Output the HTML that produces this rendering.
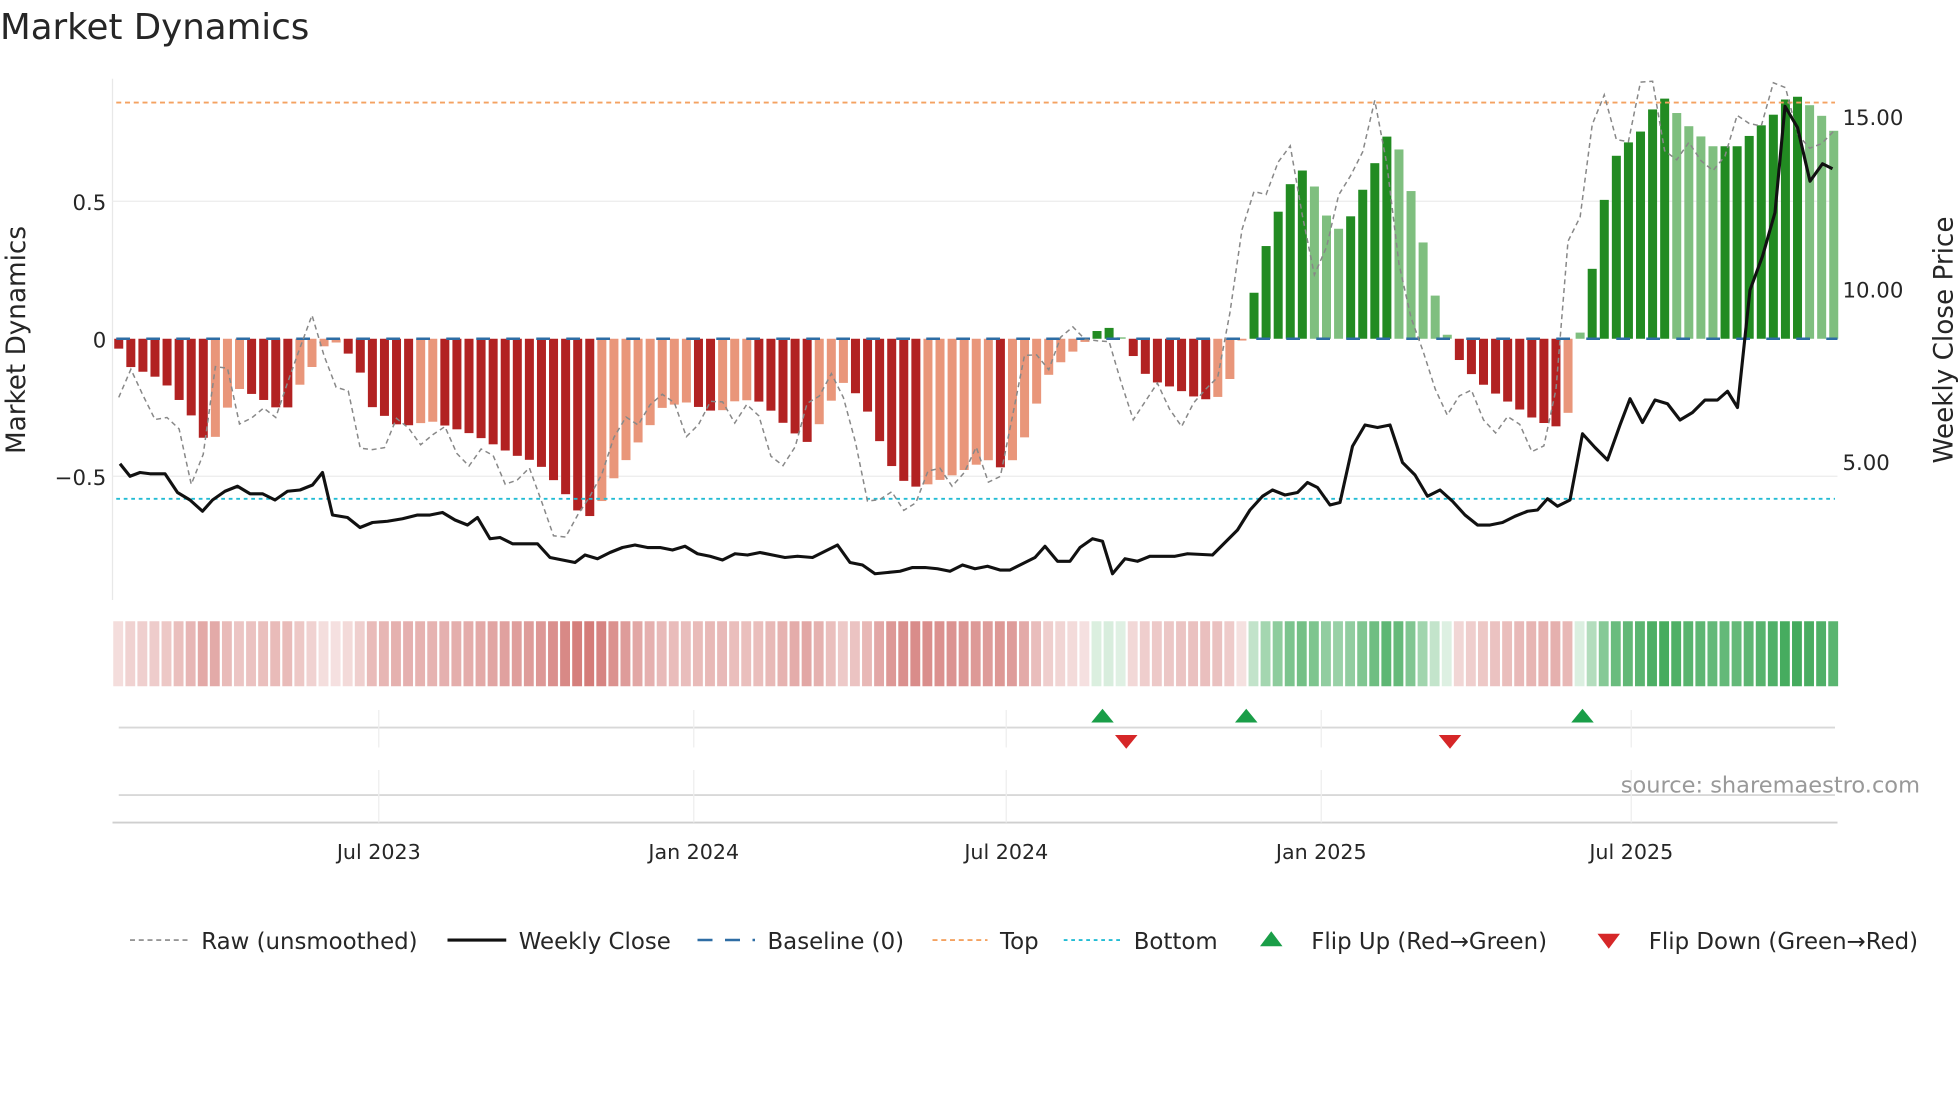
<!DOCTYPE html>
<html><head><meta charset="utf-8"><style>
html,body{margin:0;padding:0;background:#fff;width:1960px;height:1102px;overflow:hidden}
svg{display:block}
text{font-family:"DejaVu Sans","Liberation Sans",sans-serif;fill:#262626}
</style></head><body>
<svg id="s" width="1960" height="1102" viewBox="0 0 1568 881.6" xmlns="http://www.w3.org/2000/svg">
<text x="0" y="31" font-size="28.5">Market Dynamics</text>
<line x1="90" y1="63" x2="90" y2="480" stroke="#e8e8e8" stroke-width="1"/>
<line x1="90" y1="161" x2="1470" y2="161" stroke="#ececec"/>
<line x1="90" y1="381" x2="1470" y2="381" stroke="#ececec"/>
<text x="85" y="168" font-size="17" text-anchor="end">0.5</text>
<text x="85" y="278" font-size="17" text-anchor="end">0</text>
<text x="85" y="388" font-size="17" text-anchor="end">−0.5</text>
<text x="1474" y="100" font-size="17">15.00</text>
<text x="1474" y="238" font-size="17">10.00</text>
<text x="1474" y="376" font-size="17">5.00</text>
<text transform="translate(20,272) rotate(-90)" font-size="21" text-anchor="middle">Market Dynamics</text>
<text transform="translate(1562,272) rotate(-90)" font-size="21" text-anchor="middle">Weekly Close Price</text>
<g id="bars"></g>
<line x1="93" y1="82" x2="1468" y2="82" stroke="#f4a261" stroke-width="1.5" stroke-dasharray="4,3"/>
<line x1="93" y1="399" x2="1468" y2="399" stroke="#22bcd4" stroke-width="1.5" stroke-dasharray="3,3"/>
<line x1="93" y1="271" x2="1470" y2="271" stroke="#2e6da4" stroke-width="2" stroke-dasharray="11,13"/>
<polyline id="raw" fill="none" stroke="#888" stroke-width="1.2" stroke-dasharray="4,3"/>
<polyline id="close" fill="none" stroke="#111" stroke-width="2.5" stroke-linejoin="round" points="96,371 104,381 112,378 120,379 132,379 142,394 152,400 162,409 170,400 180,393 190,389 200,395 210,395 220,400 230,393 240,392 250,388 258,378 266,412 278,414 288,422 298,418 310,417 322,415 334,412 344,412 354,410 364,416 374,420 382,414 392,431 400,430 410,435 420,435 430,435 440,446 450,448 460,450 468,444 478,447 488,442 498,438 508,436 518,438 528,438 538,440 548,437 558,443 568,445 578,448 588,443 598,444 608,442 618,444 628,446 638,445 650,446 660,441 670,436 680,450 690,452 700,459 710,458 720,457 730,454 740,454 750,455 760,457 770,452 780,455 790,453 800,456 808,456 818,451 828,446 836,437 846,449 856,449 864,438 874,431 882,433 890,459 900,447 910,449 920,445 940,445 950,443 970,444 980,434 990,424 1000,408 1010,397 1018,392 1028,396 1038,394 1046,386 1054,390 1064,404 1072,402 1082,357 1092,340 1102,342 1112,340 1122,370 1132,380 1142,397 1152,392 1162,401 1172,412 1182,420 1192,420 1202,418 1212,413 1222,409 1230,408 1238,399 1246,405 1256,400 1266,347 1276,358 1286,368 1296,340 1304,319 1314,338 1324,320 1334,323 1344,336 1354,330 1364,320 1374,320 1382,313 1390,326 1400,232 1410,205 1420,170 1428,85 1438,102 1448,145 1458,131 1466,135"/>
<g id="heat"></g>
<line x1="95" y1="582" x2="1468" y2="582" stroke="#d8d8d8" stroke-width="1.5"/>
<line x1="95" y1="636" x2="1468" y2="636" stroke="#d8d8d8" stroke-width="1.5"/>
<line x1="90" y1="658" x2="1470" y2="658" stroke="#cfcfcf" stroke-width="1.5"/>
<g stroke="#eee" stroke-width="1">
<line x1="303" y1="568" x2="303" y2="598"/><line x1="555" y1="568" x2="555" y2="598"/><line x1="805" y1="568" x2="805" y2="598"/><line x1="1057" y1="568" x2="1057" y2="598"/><line x1="1305" y1="568" x2="1305" y2="598"/>
<line x1="303" y1="616" x2="303" y2="658"/><line x1="555" y1="616" x2="555" y2="658"/><line x1="805" y1="616" x2="805" y2="658"/><line x1="1057" y1="616" x2="1057" y2="658"/><line x1="1305" y1="616" x2="1305" y2="658"/>
</g>
<g fill="#1a9e48"><polygon points="873,578 891,578 882,567"/><polygon points="988,578 1006,578 997,567"/><polygon points="1257,578 1275,578 1266,567"/></g>
<g fill="#d62728"><polygon points="892,588 910,588 901,599"/><polygon points="1151,588 1169,588 1160,599"/></g>
<text x="1536" y="634" font-size="18" style="fill:#999" text-anchor="end">source: sharemaestro.com</text>
<g font-size="16.5" text-anchor="middle"><text x="303" y="687">Jul 2023</text><text x="555" y="687">Jan 2024</text><text x="805" y="687">Jul 2024</text><text x="1057" y="687">Jan 2025</text><text x="1305" y="687">Jul 2025</text></g>
<g font-size="18.3">
<line x1="104" y1="752" x2="150" y2="752" stroke="#888" stroke-width="1.3" stroke-dasharray="4,3"/><text x="161" y="759">Raw (unsmoothed)</text>
<line x1="358" y1="752" x2="405" y2="752" stroke="#111" stroke-width="2.5"/><text x="415" y="759">Weekly Close</text>
<line x1="558" y1="752" x2="604" y2="752" stroke="#2e6da4" stroke-width="2" stroke-dasharray="12,10"/><text x="614" y="759">Baseline (0)</text>
<line x1="746" y1="752" x2="790" y2="752" stroke="#f4a261" stroke-width="1.5" stroke-dasharray="4,3"/><text x="800" y="759">Top</text>
<line x1="851" y1="752" x2="896" y2="752" stroke="#22bcd4" stroke-width="1.5" stroke-dasharray="3,3"/><text x="907" y="759">Bottom</text>
<polygon points="1008,757 1026,757 1017,745" fill="#1a9e48"/><text x="1049" y="759">Flip Up (Red→Green)</text>
<polygon points="1278,747 1296,747 1287,759" fill="#d62728"/><text x="1319" y="759">Flip Down (Green→Red)</text>
</g>
</svg>
<script>
var kp=[[93,-0.02],[103,-0.1],[120,-0.13],[130,-0.15],[152,-0.27],[162,-0.36],[172,-0.36],[182,-0.25],[192,-0.18],[210,-0.22],[228,-0.27],[238,-0.18],[250,-0.1],[258,-0.03],[268,-0.01],[278,-0.05],[288,-0.12],[298,-0.25],[320,-0.32],[345,-0.3],[380,-0.35],[410,-0.42],[430,-0.45],[450,-0.55],[468,-0.66],[478,-0.62],[492,-0.5],[510,-0.38],[530,-0.25],[548,-0.23],[560,-0.25],[575,-0.27],[590,-0.22],[610,-0.23],[625,-0.3],[645,-0.38],[660,-0.28],[672,-0.15],[690,-0.22],[708,-0.42],[718,-0.5],[730,-0.54],[742,-0.53],[760,-0.5],[790,-0.44],[805,-0.48],[818,-0.38],[828,-0.25],[840,-0.12],[855,-0.06],[865,-0.02],[872,0],[882,0.05],[892,0.03],[900,-0.01],[910,-0.09],[920,-0.15],[940,-0.18],[960,-0.22],[970,-0.22],[980,-0.2],[988,-0.09],[996,0.03],[1006,0.22],[1016,0.39],[1026,0.5],[1036,0.6],[1046,0.62],[1056,0.5],[1066,0.4],[1076,0.4],[1086,0.5],[1096,0.6],[1112,0.76],[1122,0.66],[1132,0.48],[1142,0.28],[1152,0.08],[1160,-0.01],[1170,-0.1],[1190,-0.18],[1210,-0.24],[1230,-0.3],[1246,-0.32],[1256,-0.26],[1264,0.02],[1274,0.26],[1284,0.52],[1294,0.68],[1312,0.75],[1324,0.85],[1334,0.88],[1344,0.8],[1370,0.7],[1390,0.7],[1410,0.78],[1420,0.82],[1430,0.88],[1440,0.88],[1450,0.84],[1460,0.8],[1468,0.75]];
function f(x){for(var i=1;i<kp.length;i++){if(x<=kp[i][0]){var a=kp[i-1],b=kp[i];return a[1]+(b[1]-a[1])*(x-a[0])/(b[0]-a[0]);}}return kp[kp.length-1][1];}
var NS="http://www.w3.org/2000/svg",bars=document.getElementById('bars'),heat=document.getElementById('heat');
var vs=[],xs=[],N=143,st=(1467-95)/(N-1);for(var k=0;k<N;k++){var x=95+k*st;xs.push(x);vs.push(f(x));}
var raw=[];
for(var i=0;i<vs.length;i++){
 var v=vs[i],p=i?vs[i-1]:v,x=xs[i];
 var dark=Math.abs(v)>=Math.abs(p);
 var c=v>=0?(dark?'#228b22':'#7fbf7f'):(dark?'#b22222':'#e9967a');
 var h=Math.abs(v)*220,y=v>=0?271-h:271;
 var r=document.createElementNS(NS,'rect');r.setAttribute('x',x-3.6);r.setAttribute('y',y);r.setAttribute('width',7.2);r.setAttribute('height',Math.max(h,1));r.setAttribute('fill',c);bars.appendChild(r);
 var a=0.15+0.75*Math.min(Math.abs(v),0.9)/0.9;
 var hc=document.createElementNS(NS,'rect');hc.setAttribute('x',x-4.4);hc.setAttribute('y',497);hc.setAttribute('width',7.9);hc.setAttribute('height',52);
 hc.setAttribute('fill',v>=0?'#2ca048':'#c0403c');hc.setAttribute('fill-opacity',a);heat.appendChild(hc);
 var n=i+1<vs.length?vs[i+1]:v;var rv=v+2.2*(n-v)+0.06*Math.sin(i*1.7)-0.03;
 raw.push(x.toFixed(1)+','+(271-rv*220).toFixed(1));
}
document.getElementById('raw').setAttribute('points',raw.join(' '));
</script>
</body></html>
